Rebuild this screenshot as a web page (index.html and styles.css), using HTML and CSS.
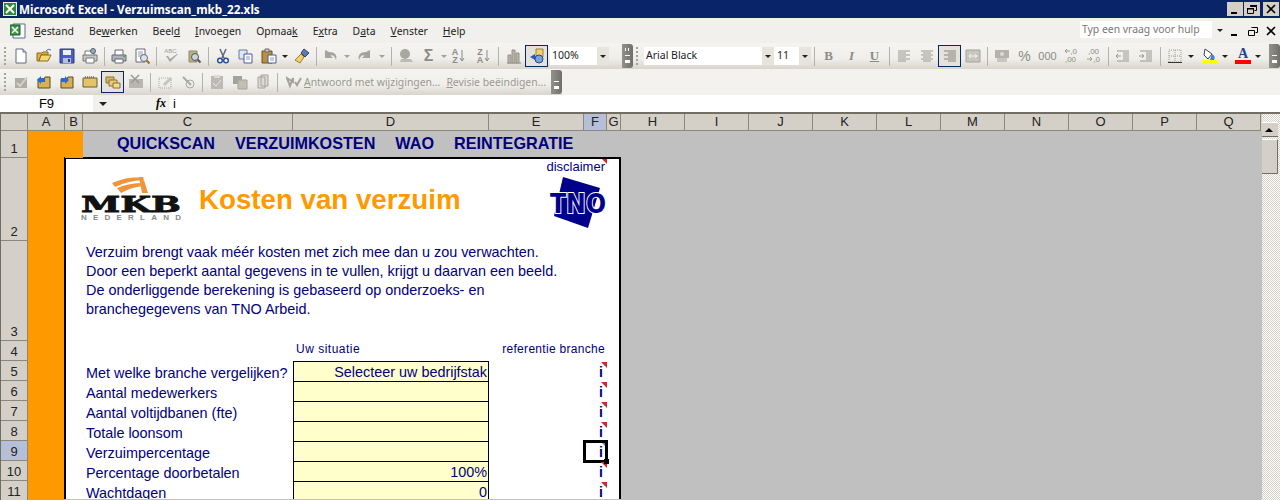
FILE: index.html
```html
<!DOCTYPE html>
<html lang="nl">
<head>
    <meta charset="UTF-8">
    <title>Microsoft Excel - Verzuimscan_mkb_22.xls</title>
    <link rel="stylesheet" href="styles.css">
</head>
<body>
<svg class="defs" width="0" height="0">
    <symbol id="i-new" viewBox="0 0 16 16"><path d="M3 1h7l3 3v11H3z" fill="#fff" stroke="#5a6a80"/><path d="M10 1v3h3" fill="#dde" stroke="#5a6a80"/></symbol>
    <symbol id="i-open" viewBox="0 0 16 16"><path d="M1 5h5l1-1h5v3H5L3 13H1z" fill="#e0b040" stroke="#8a6a20"/><path d="M3 13l2-6h10l-3 6z" fill="#f5d878" stroke="#8a6a20"/><path d="M10 3q2-3 5-1" fill="none" stroke="#4a6cc0"/></symbol>
    <symbol id="i-save" viewBox="0 0 16 16"><path d="M1 1h14v14H1z" fill="#4a5ec0" stroke="#2a3a80"/><path d="M4 2h8v5H4z" fill="#f0f0f0"/><path d="M4 10h8v5H4z" fill="#b8c0e0"/><path d="M9 11h2v3H9z" fill="#2a3a80"/></symbol>
    <symbol id="i-perm" viewBox="0 0 16 16"><path d="M3 7V3h9v4" fill="#fff" stroke="#777"/><path d="M1 7h14v6H1z" fill="#c8c8c8" stroke="#777"/><path d="M4 10h8v5H4z" fill="#fff" stroke="#777"/><circle cx="11" cy="3" r="2.5" fill="#9ab" stroke="#567"/></symbol>
    <symbol id="i-print" viewBox="0 0 16 16"><path d="M4 7V2h8v5" fill="#fff" stroke="#667"/><path d="M1 7h14v6H1z" fill="#aeb4bc" stroke="#667"/><path d="M4 11h8v4H4z" fill="#fff" stroke="#667"/><path d="M12 8h2v1h-2z" fill="#4a4"/></symbol>
    <symbol id="i-preview" viewBox="0 0 16 16"><path d="M2 1h9v13H2z" fill="#fff" stroke="#667"/><path d="M4 4h5M4 6h5M4 8h3" stroke="#99a"/><circle cx="10" cy="10" r="3.5" fill="#d8e4f4" stroke="#667"/><path d="M12.500 12.500l3 3" stroke="#a06a20" stroke-width="2"/></symbol>
    <symbol id="i-research" viewBox="0 0 16 16"><path d="M3 3h8v11H3z" fill="#c4b070" stroke="#888"/><circle cx="9" cy="9" r="3.500" fill="#c8d4e4" stroke="#555"/><path d="M11.500 11.500l3 3" stroke="#555" stroke-width="2"/></symbol>
    <symbol id="i-cut" viewBox="0 0 16 16"><path d="M5 1l4 9M11 1L7 10" stroke="#667" stroke-width="1.500" fill="none"/><circle cx="5" cy="12.500" r="2.300" fill="#fff" stroke="#2a4aa0" stroke-width="1.500"/><circle cx="11" cy="12.500" r="2.300" fill="#fff" stroke="#2a4aa0" stroke-width="1.500"/></symbol>
    <symbol id="i-copy" viewBox="0 0 16 16"><path d="M1 2h8v9H1z" fill="#dfe6f4" stroke="#6a7aa0"/><path d="M6 6h8v9H6z" fill="#fff" stroke="#4a5aa0"/><path d="M8 9h4M8 11h4" stroke="#89b"/></symbol>
    <symbol id="i-paste" viewBox="0 0 16 16"><path d="M1 3h10v12H1z" fill="#b89040" stroke="#6a5020"/><path d="M4 1h4v3H4z" fill="#ccc" stroke="#666"/><path d="M7 7h8v8H7z" fill="#fff" stroke="#4a5aa0"/><path d="M9 10h4M9 12h4" stroke="#89b"/></symbol>
    <symbol id="i-brush" viewBox="0 0 16 16"><path d="M10 1l5 4-4 4-4-4z" fill="#5a7ac0" stroke="#345"/><path d="M7 6l3 3-4 6-5-3z" fill="#f0d070" stroke="#a08030"/></symbol>
    <symbol id="i-undo" viewBox="0 0 16 16"><path d="M2 2v8h8L7.500 7.500Q11 6 13 12 15 4 6 4z" fill="#a4a49c"/></symbol>
    <symbol id="i-redo" viewBox="0 0 16 16"><path d="M14 2v8H6l2.500-2.500Q5 6 3 12 1 4 10 4z" fill="#a4a49c"/></symbol>
    <symbol id="i-link" viewBox="0 0 16 16"><circle cx="7" cy="6" r="5" fill="#a8a8a0"/><path d="M3 11h10l2 3H2z" fill="#bcbcb4"/></symbol>
    <symbol id="i-chart" viewBox="0 0 16 16"><path d="M1 15h14" stroke="#888"/><path d="M2 7h3v8H2zM6 2h3v13H6zM10 5h3v10h-3z" fill="#b8b4a4" stroke="#96928a"/></symbol>
    <symbol id="i-draw" viewBox="0 0 16 16"><path d="M7 1h7v8H7z" fill="#f0d070" stroke="#a08030"/><path d="M1 9l5-3v6z" fill="#2a5ac0"/><circle cx="10" cy="11" r="4" fill="#7aa0e0" stroke="#2a4a90"/></symbol>
    <symbol id="i-left" viewBox="0 0 16 16"><path d="M2 3h12M2 5h8M2 7h12M2 9h8M2 11h12M2 13h8" stroke="#9a9a94"/></symbol>
    <symbol id="i-center" viewBox="0 0 16 16"><path d="M2 3h12M4 5h8M2 7h12M4 9h8M2 11h12M4 13h8" stroke="#9a9a94"/></symbol>
    <symbol id="i-right" viewBox="0 0 16 16"><path d="M2 3h12M6 5h8M2 7h12M6 9h8M2 11h12M6 13h8" stroke="#84847e"/></symbol>
    <symbol id="i-merge" viewBox="0 0 16 16"><path d="M1 2h14v12H1z" fill="#c8c6be" stroke="#a4a29a"/><path d="M4 8h8M4 8l2-2M4 8l2 2M12 8l-2-2M12 8l-2 2" stroke="#f4f4f0" fill="none"/></symbol>
    <symbol id="i-money" viewBox="0 0 16 16"><path d="M1 2h14v8H1z" fill="#b4b2aa"/><path d="M3 10h10v4H3z" fill="#c8c6be"/><circle cx="8" cy="6" r="2" fill="#dcdad2"/></symbol>
    <symbol id="i-outdent" viewBox="0 0 16 16"><path d="M2 3h12M8 5h6M8 7h6M8 9h6M8 11h6M2 13h12" stroke="#9a9a94"/><path d="M6 8H1l2-2M1 8l2 2" stroke="#9a9a94" fill="none"/></symbol>
    <symbol id="i-indent" viewBox="0 0 16 16"><path d="M2 3h12M8 5h6M8 7h6M8 9h6M8 11h6M2 13h12" stroke="#9a9a94"/><path d="M1 8h5L4 6M6 8l-2 2" stroke="#9a9a94" fill="none"/></symbol>
    <symbol id="i-border" viewBox="0 0 16 16"><path d="M2 2h12v12H2zM8 2v12M2 8h12" fill="none" stroke="#9a9a94" stroke-dasharray="1 1"/><path d="M1 14.500h14" stroke="#333"/></symbol>
    <symbol id="i-fill" viewBox="0 0 16 16"><path d="M3 1l7 5-4 5-4-4z" fill="#fff" stroke="#345"/><path d="M10 6q4 2 2 6l-4 0z" fill="#4a7ad0"/><path d="M0 12h16v4H0z" fill="#ff0"/></symbol>
    <symbol id="i-check" viewBox="0 0 16 16"><path d="M2 4h12v10H2z" fill="#aeaca4"/><path d="M4 9l3 3 7-9" stroke="#d4d2ca" fill="none" stroke-width="2"/></symbol>
    <symbol id="i-prev" viewBox="0 0 16 16"><path d="M2 5h6l1-2h5v11H2z" fill="#d8b050" stroke="#5a4a20"/><path d="M1 6l4-4v2h4v4H5v2z" fill="#2a6ad0"/></symbol>
    <symbol id="i-next" viewBox="0 0 16 16"><path d="M2 5h6l1-2h5v11H2z" fill="#d8b050" stroke="#5a4a20"/><path d="M10 6L6 2v2H2v4h4v2z" fill="#2a6ad0"/></symbol>
    <symbol id="i-box" viewBox="0 0 16 16"><path d="M1 4h14v9H1z" fill="#e4c468" stroke="#6a5a30"/><path d="M3 3h10" stroke="#333" stroke-dasharray="1 1"/></symbol>
    <symbol id="i-stack" viewBox="0 0 16 16"><path d="M1 3h8v6H1z" fill="#d8b860" stroke="#8a7030"/><path d="M4 6h8v6H4z" fill="#e8cc78" stroke="#8a7030"/><path d="M8 9h7v5H8z" fill="#f0dc98" stroke="#8a7030"/></symbol>
    <symbol id="i-del" viewBox="0 0 16 16"><path d="M1 5h14v9H1z" fill="#b8b6ae"/><path d="M3 1l8 8M11 1L3 9" stroke="#9a9890" stroke-width="1.500"/></symbol>
    <symbol id="i-grey1" viewBox="0 0 16 16"><path d="M2 4h12v10H2z" fill="none" stroke="#aaa8a0" stroke-dasharray="1 1"/><path d="M6 10l7-7 2 2-7 7z" fill="#c4c2ba"/></symbol>
    <symbol id="i-grey2" viewBox="0 0 16 16"><path d="M3 3l8 8" stroke="#aaa8a0" stroke-width="2"/><circle cx="10" cy="10" r="4" fill="none" stroke="#aaa8a0"/></symbol>
    <symbol id="i-grey3" viewBox="0 0 16 16"><path d="M2 2h12v13H2z" fill="#bcbab2"/><path d="M5 1h6v3H5z" fill="#dcdad2"/><path d="M4 9l3 3 5-6" stroke="#e8e8e0" fill="none"/></symbol>
    <symbol id="i-grey4" viewBox="0 0 16 16"><path d="M1 2h9v8H1z" fill="#a4a29a"/><path d="M6 6h9v9H6z" fill="#c0beb6" stroke="#a4a29a"/></symbol>
    <symbol id="i-grey5" viewBox="0 0 16 16"><path d="M3 3h7v11H3zM6 1h7v11H6z" fill="#dcdad2" stroke="#a4a29a"/></symbol>
    <symbol id="i-reply" viewBox="0 0 16 16"><path d="M1 4l6 4V4l-3 8zM9 8l2 3 4-7" fill="none" stroke="#a4a29a" stroke-width="2"/></symbol>
    <symbol id="i-arrow" viewBox="0 0 6 16"><path d="M3 2v11M1 10l2 3 2-3" fill="none" stroke="#8c8c86"/></symbol>
    <symbol id="i-tick" viewBox="0 0 16 10"><path d="M3 2l4 6 8-8-1-0-7 5-2-3z" fill="#a8a49a"/></symbol>
    <symbol id="i-larrow" viewBox="0 0 6 6"><path d="M6 3H1M1 3l2-2M1 3l2 2" fill="none" stroke="#9a9a94"/></symbol>
    <symbol id="i-rarrow" viewBox="0 0 6 6"><path d="M0 3h5M5 3L3 1M5 3L3 5" fill="none" stroke="#9a9a94"/></symbol>
</svg>

<div class="titlebar">
    <svg class="app-icon" width="14" height="14" viewBox="0 0 14 14"><path d="M0 0h14v14H0z" fill="#e8f0e0"/><path d="M1 1h12v12H1z" fill="#2f8a3c"/><path d="M3 3l8 8M11 3l-8 8" stroke="#fff" stroke-width="2"/></svg>
    <span class="title-text">Microsoft Excel - Verzuimscan_mkb_22.xls</span>
    <div class="win-btns">
        <span class="win-btn"><svg width="10" height="10" viewBox="0 0 10 10"><path d="M1 8h6v2H1z"/></svg></span>
        <span class="win-btn"><svg width="10" height="10" viewBox="0 0 10 10"><path d="M3.500 2.500h6v4h-2M.5 4.500h6v5h-6z" fill="none" stroke="#000"/><path d="M3 1h7v1.500H3zM0 4h7v1.500H0z"/></svg></span>
        <span class="win-btn"><svg width="10" height="10" viewBox="0 0 10 10"><path d="M1 1l8 8M9 1L1 9" stroke="#000" stroke-width="1.600"/></svg></span>
    </div>
</div>

<div class="menubar">
    <svg class="sheet-icon" width="17" height="16" viewBox="0 0 17 16"><path d="M3 1h12v14H3z" fill="#fff" stroke="#5a6a90"/><path d="M0 2h10v10H0z" fill="#3a9a48" stroke="#1c5a28"/><path d="M2 4l6 6M8 4l-6 6" stroke="#fff" stroke-width="1.500"/></svg>
    <nav class="menu">
        <span><u>B</u>estand</span>
        <span>Be<u>w</u>erken</span>
        <span>Beel<u>d</u></span>
        <span><u>I</u>nvoegen</span>
        <span>Opmaa<u>k</u></span>
        <span>E<u>x</u>tra</span>
        <span>D<u>a</u>ta</span>
        <span><u>V</u>enster</span>
        <span><u>H</u>elp</span>
    </nav>
    <div class="help-box">Typ een vraag voor hulp</div>
    <span class="drop dark help-drop"></span>
    <div class="doc-btns">
        <svg width="10" height="10" viewBox="0 0 10 10"><path d="M1 8h6v2H1z"/></svg>
        <svg width="10" height="10" viewBox="0 0 10 10"><path d="M3.500 1.500h6v5h-2M.5 4.500h6v5h-6z" fill="none" stroke="#000"/></svg>
        <svg width="10" height="10" viewBox="0 0 10 10"><path d="M1 1l8 8M9 1L1 9" stroke="#000" stroke-width="1.600"/></svg>
    </div>
</div>

<div class="toolbar">
    <span class="grip"></span>
    <span class="btn"><svg><use href="#i-new"/></svg></span>
    <span class="btn"><svg><use href="#i-open"/></svg></span>
    <span class="btn"><svg><use href="#i-save"/></svg></span>
    <span class="btn"><svg><use href="#i-perm"/></svg></span>
    <span class="sep"></span>
    <span class="btn"><svg><use href="#i-print"/></svg></span>
    <span class="btn"><svg><use href="#i-preview"/></svg></span>
    <span class="sep"></span>
    <span class="btn spell"><span class="abc">ABC</span><svg><use href="#i-tick"/></svg></span>
    <span class="btn"><svg><use href="#i-research"/></svg></span>
    <span class="sep"></span>
    <span class="btn"><svg><use href="#i-cut"/></svg></span>
    <span class="btn"><svg><use href="#i-copy"/></svg></span>
    <span class="btn"><svg><use href="#i-paste"/></svg></span>
    <span class="dropcell"><span class="drop dark"></span></span>
    <span class="btn"><svg><use href="#i-brush"/></svg></span>
    <span class="sep"></span>
    <span class="btn"><svg><use href="#i-undo"/></svg></span>
    <span class="dropcell"><span class="drop"></span></span>
    <span class="btn"><svg><use href="#i-redo"/></svg></span>
    <span class="dropcell wide"><span class="drop"></span></span>
    <span class="sep"></span>
    <span class="btn"><svg><use href="#i-link"/></svg></span>
    <span class="btn glyph">Σ</span>
    <span class="dropcell narrow"><span class="drop"></span></span>
    <span class="btn sort"><span class="az">A<br>Z</span><svg class="sort-arrow"><use href="#i-arrow"/></svg></span>
    <span class="btn sort second-sort"><span class="az">Z<br>A</span><svg class="sort-arrow"><use href="#i-arrow"/></svg></span>
    <span class="sep"></span>
    <span class="btn chart"><svg><use href="#i-chart"/></svg></span>
    <span class="btn on"><svg><use href="#i-draw"/></svg></span>
    <span class="combo zoom-box">100%<span class="combo-arrow"></span></span>
    <span class="chevron wide"></span>
    <span class="grip"></span>
    <span class="combo font-box">Arial Black<span class="combo-arrow"></span></span>
    <span class="combo size-box">11<span class="combo-arrow"></span></span>
    <span class="sep"></span>
    <span class="btn txt bold">B</span>
    <span class="btn txt italic">I</span>
    <span class="btn txt under">U</span>
    <span class="sep"></span>
    <span class="btn"><svg><use href="#i-left"/></svg></span>
    <span class="btn"><svg><use href="#i-center"/></svg></span>
    <span class="btn on"><svg><use href="#i-right"/></svg></span>
    <span class="btn"><svg><use href="#i-merge"/></svg></span>
    <span class="sep"></span>
    <span class="btn"><svg><use href="#i-money"/></svg></span>
    <span class="btn txt pct">%</span>
    <span class="btn txt thou">000</span>
    <span class="btn dec"><span class="dec-top"><svg><use href="#i-larrow"/></svg>,0</span><span>,00</span></span>
    <span class="btn dec"><span class="dec-top">,00</span><span><svg><use href="#i-rarrow"/></svg>,0</span></span>
    <span class="sep"></span>
    <span class="btn"><svg><use href="#i-outdent"/></svg></span>
    <span class="btn"><svg><use href="#i-indent"/></svg></span>
    <span class="sep"></span>
    <span class="btn"><svg><use href="#i-border"/></svg></span>
    <span class="dropcell"><span class="drop dark"></span></span>
    <span class="btn small fill"><svg><use href="#i-fill"/></svg></span>
    <span class="dropcell"><span class="drop dark"></span></span>
    <span class="btn small color"><span class="color-a">A</span></span>
    <span class="dropcell"><span class="drop dark"></span></span>
    <span class="chevron"></span>
</div>

<div class="toolbar second">
    <div class="toolbar-part">
        <span class="grip"></span>
        <span class="btn"><svg><use href="#i-check"/></svg></span>
        <span class="btn"><svg><use href="#i-prev"/></svg></span>
        <span class="btn"><svg><use href="#i-next"/></svg></span>
        <span class="btn"><svg><use href="#i-box"/></svg></span>
        <span class="btn on"><svg><use href="#i-stack"/></svg></span>
        <span class="btn"><svg><use href="#i-del"/></svg></span>
        <span class="sep"></span>
        <span class="btn"><svg><use href="#i-grey1"/></svg></span>
        <span class="btn"><svg><use href="#i-grey2"/></svg></span>
        <span class="sep"></span>
        <span class="btn"><svg><use href="#i-grey3"/></svg></span>
        <span class="btn"><svg><use href="#i-grey4"/></svg></span>
        <span class="btn"><svg><use href="#i-grey5"/></svg></span>
        <span class="sep"></span>
        <svg class="reply"><use href="#i-reply"/></svg>
        <span class="tool-text answer"><u>A</u>ntwoord met wijzigingen...</span>
        <span class="tool-text"><u>R</u>evisie beëindigen...</span>
        <span class="chevron"></span>
    </div>
</div>

<div class="formula">
    <div class="namebox">F9</div>
    <span class="drop dark name-drop"></span>
    <span class="fx">fx</span>
    <div class="formula-input">i</div>
</div>

<div class="sheet">
    <div class="sheet-main">
        <div class="col-heads">
            <span></span>
            <span>A</span><span>B</span><span>C</span><span>D</span><span>E</span>
            <span class="cur">F</span><span>G</span><span>H</span><span>I</span>
            <span>J</span><span>K</span><span>L</span><span>M</span><span>N</span>
            <span>O</span><span>P</span><span>Q</span>
        </div>
        <div class="sheet-body">
            <div class="row-heads">
                <span class="r1">1</span>
                <span class="r2">2</span>
                <span class="r3">3</span>
                <span>4</span>
                <span>5</span>
                <span>6</span>
                <span>7</span>
                <span>8</span>
                <span class="cur">9</span>
                <span>10</span>
                <span>11</span>
            </div>
            <div class="stripe"></div>
            <div class="content">
                <div class="nav-row">
                    <div class="nav-orange"></div>
                    <div class="nav-links">
                        <span>QUICKSCAN</span>
                        <span>VERZUIMKOSTEN</span>
                        <span>WAO</span>
                        <span>REINTEGRATIE</span>
                    </div>
                </div>
                <div class="panel">
                    <div class="head">
                        <svg class="mkb" width="102" height="45" viewBox="0 0 102 45">
                            <path d="M31 6Q44 0 60 0L63 3Q46 4 34 10zM36 11Q48 6 62 6L64 9Q50 10 40 16zM58 0h4l5 16h-6z" fill="#f0943a"/>
                            <text class="mkb-word" x="0" y="35" textLength="100" lengthAdjust="spacingAndGlyphs">MKB</text>
                            <text class="mkb-sub" x="0" y="43" textLength="100">NEDERLAND</text>
                        </svg>
                        <h1>Kosten van verzuim</h1>
                        <div class="head-right">
                            <span class="disclaimer">disclaimer</span>
                            <svg class="tno" width="58" height="52" viewBox="0 0 58 52">
                                <path d="M14 0L51 11 39 51 5 39z" fill="#00008b"/>
                                <text class="tno-word" x="1" y="36" textLength="56" lengthAdjust="spacingAndGlyphs">TNO</text>
                            </svg>
                        </div>
                    </div>
                    <p class="intro">Verzuim brengt vaak méér kosten met zich mee dan u zou verwachten.<br>Door een beperkt aantal gegevens in te vullen, krijgt u daarvan een beeld.<br>De onderliggende berekening is gebaseerd op onderzoeks- en<br>branchegegevens van TNO Arbeid.</p>
                    <div class="form-head">
                        <span>Uw situatie</span>
                        <span>referentie branche</span>
                    </div>
                    <div class="form-row"><span class="lbl">Met welke branche vergelijken?</span><span class="val">Selecteer uw bedrijfstak</span><span class="info">i</span></div>
                    <div class="form-row"><span class="lbl">Aantal medewerkers</span><span class="val"></span><span class="info">i</span></div>
                    <div class="form-row"><span class="lbl">Aantal voltijdbanen (fte)</span><span class="val"></span><span class="info">i</span></div>
                    <div class="form-row"><span class="lbl">Totale loonsom</span><span class="val"></span><span class="info">i</span></div>
                    <div class="form-row"><span class="lbl">Verzuimpercentage</span><span class="val"></span><span class="info selected">i<span class="handle"></span></span></div>
                    <div class="form-row"><span class="lbl">Percentage doorbetalen</span><span class="val">100%</span><span class="info">i</span></div>
                    <div class="form-row"><span class="lbl">Wachtdagen</span><span class="val">0</span><span class="info">i</span></div>
                </div>
            </div>
        </div>
    </div>
    <div class="vscroll">
        <span class="sb-btn"></span>
        <span class="sb-thumb"></span>
    </div>
</div>
</body>
</html>
```

FILE: styles.css
```css
* {
    margin: 0;
    padding: 0;
    box-sizing: border-box;
}

html, body {
    width: 1280px;
    height: 500px;
    overflow: hidden;
}

body {
    background: #c0c0c0;
    font-family: "Liberation Sans", Arial, sans-serif;
    color: #000;
}

.defs {
    display: block;
    height: 0;
}

/* title bar */
.titlebar {
    height: 18px;
    background: #0a246a;
    display: flex;
    align-items: center;
    padding-left: 3px;
}

.title-text {
    margin-left: 2px;
    color: #fff;
    font: bold 11.7px "Noto Sans", sans-serif;
}

.win-btns {
    margin-left: auto;
    margin-right: 1px;
    display: flex;
}

.win-btn {
    width: 16px;
    height: 14px;
    margin-left: 1px;
    background: #d4d0c8;
    display: flex;
    align-items: center;
    justify-content: center;
}

.win-btn:last-child {
    margin-left: 3px;
}

/* menu */
.menubar {
    height: 25px;
    background: #f1f0ec;
    display: flex;
    align-items: center;
    padding-left: 10px;
    font: 10.4px "Noto Sans", sans-serif;
    color: #222;
}

.menu {
    margin-left: 7px;
    display: flex;
    gap: 15px;
}

.help-box {
    margin-left: auto;
    width: 132px;
    height: 17px;
    margin-top: -3px;
    padding-left: 2px;
    background: #fff;
    color: #777;
    line-height: 17px;
}

.help-drop {
    margin: 0 7px 0 5px;
}

.doc-btns {
    display: flex;
    gap: 8px;
    margin-right: 4px;
}

/* toolbars */
.toolbar {
    height: 26px;
    display: flex;
    align-items: center;
    background: linear-gradient(#f5f4f0, #efeeea 60%, #d8d5cc);
    padding-left: 3px;
    color: #555;
}

.toolbar.second {
    background: #f3f2ee;
    padding-left: 0;
}

.toolbar-part {
    height: 26px;
    width: 562px;
    padding-left: 3px;
    display: flex;
    align-items: center;
    background: linear-gradient(#f5f4f0, #efeeea 60%, #d8d5cc);
}

.grip {
    width: 5px;
    height: 18px;
    margin-right: 1px;
    background: repeating-linear-gradient(#a4a29a 0 2px, transparent 2px 4px) 1px 0 / 2px 100% no-repeat;
}

.btn {
    width: 23px;
    height: 22px;
    flex: none;
    display: flex;
    align-items: center;
    justify-content: center;
}

.btn svg {
    width: 16px;
    height: 16px;
}

.btn.small {
    width: 20px;
}

.btn.fill {
    margin-left: 4px;
}

.btn.color {
    margin-left: 3px;
}

.color-a {
    width: 16px;
    height: 16px;
    display: block;
    font: bold 14px/12px "Liberation Serif", serif;
    text-align: center;
    color: #23408f;
    border-bottom: 4px solid #f00;
}

.btn.on {
    background: #e4e2da;
    border: 1px solid #0a246a;
}

.btn.chart {
    margin-left: 1px;
}

.spell {
    flex-direction: column;
}

.abc {
    font-size: 6px;
    line-height: 6px;
    color: #999;
}

.spell svg {
    height: 10px;
}

.sep {
    width: 6px;
    height: 19px;
    flex: none;
    background: linear-gradient(#b4b2aa, #b4b2aa) center / 1px 100% no-repeat;
}

.dropcell {
    width: 10px;
    flex: none;
    display: flex;
    justify-content: center;
}

.dropcell.wide {
    width: 13px;
}

.dropcell.narrow {
    width: 7px;
}

.drop {
    width: 0;
    height: 0;
    flex: none;
    border-left: 3px solid transparent;
    border-right: 3px solid transparent;
    border-top: 3px solid #a4a29a;
}

.drop.dark {
    border-top-color: #222;
}

.glyph {
    font-size: 16px;
    font-weight: bold;
    color: #8c8c86;
}

.sort {
    gap: 1px;
}

.second-sort {
    margin-left: 2px;
}

.az {
    font-size: 9px;
    line-height: 8px;
    font-weight: bold;
    text-align: center;
    color: #8c8c86;
}

.btn svg.sort-arrow {
    width: 6px;
}

.dec {
    flex-direction: column;
    font-size: 8px;
    line-height: 8px;
    color: #8c8c86;
}

.dec svg {
    width: 6px;
    height: 6px;
}

.txt {
    font-family: "Liberation Serif", serif;
    font-size: 13px;
    color: #8c8c86;
}

.bold {
    font-weight: bold;
}

.italic {
    font-style: italic;
    font-weight: bold;
}

.under {
    font-weight: bold;
    text-decoration: underline;
}

.pct {
    font-family: "Liberation Sans", sans-serif;
    font-size: 14px;
}

.thou {
    font-family: "Liberation Sans", sans-serif;
    font-size: 11px;
}

.combo {
    height: 18px;
    flex: none;
    position: relative;
    padding-left: 2px;
    background: #fff;
    color: #222;
    font: 10.5px/17px "Noto Sans", sans-serif;
}

.combo-arrow {
    position: absolute;
    right: 0;
    top: 0;
    width: 12px;
    height: 18px;
    background: #e6e4dc;
}

.combo-arrow::after {
    content: "";
    position: absolute;
    left: 3px;
    top: 8px;
    border-left: 3px solid transparent;
    border-right: 3px solid transparent;
    border-top: 3px solid #222;
}

.zoom-box {
    width: 59px;
    margin-left: 2px;
    margin-right: 13px;
}

.font-box {
    width: 130px;
    margin-left: 3px;
}

.size-box {
    width: 37px;
    padding-left: 3px;
}

.chevron {
    width: 11px;
    height: 24px;
    flex: none;
    position: relative;
    background: linear-gradient(90deg, #92918b, #70706a);
    border-radius: 0 3px 3px 0;
}

.chevron::after {
    content: "";
    position: absolute;
    left: 3px;
    bottom: 5px;
    width: 5px;
    height: 4px;
    border-top: 1px solid #fff;
    border-bottom: 3px solid #fff;
}

.chevron.wide {
    margin-right: 2px;
}

.chevron.wide::before {
    content: "";
    position: absolute;
    left: 3px;
    top: 4px;
    width: 5px;
    height: 3px;
    background: repeating-linear-gradient(90deg, #fff 0 1px, transparent 1px 3px);
}

.toolbar > .chevron:last-child {
    margin-left: auto;
}

.reply {
    width: 16px;
    height: 16px;
    margin-left: 6px;
}

.tool-text {
    font: 10.4px "Noto Sans", sans-serif;
    color: #9a9890;
    white-space: nowrap;
}

.answer {
    margin-left: 2px;
    margin-right: 6px;
}

.toolbar-part > .chevron {
    margin-left: auto;
}

/* formula bar */
.formula {
    height: 17px;
    display: flex;
    align-items: center;
    background: #f1f0ec;
}

.namebox {
    width: 93px;
    height: 17px;
    background: #fff;
    font-size: 13px;
    line-height: 17px;
    text-align: center;
}

.name-drop {
    margin-left: 6px;
    border-left-width: 4px;
    border-right-width: 4px;
    border-top-width: 4px;
}

.fx {
    width: 14px;
    margin-left: 49px;
    font: italic bold 12px "Liberation Serif", serif;
}

.formula-input {
    flex: 1;
    height: 17px;
    padding-left: 3px;
    background: #fff;
    font-size: 13px;
    line-height: 17px;
}

/* sheet */
.sheet {
    display: flex;
    height: 388px;
    overflow: hidden;
}

.sheet-main {
    width: 1262px;
}

.col-heads {
    height: 19px;
    display: grid;
    grid-template-columns: 27px 37px 18px 210px 196px 95px 23px 14px repeat(10, 64px);
    background: #d4d0c8;
    border-top: 2px solid #716f64;
    border-left: 1px solid #716f64;
    font-size: 13px;
    line-height: 16px;
    text-align: center;
    color: #222;
}

.col-heads span {
    border-right: 1px solid #8a887e;
    border-bottom: 1px solid #8a887e;
}

.col-heads .cur,
.row-heads .cur {
    background: #b5c0d8;
}

.sheet-body {
    display: flex;
    height: 369px;
    overflow: hidden;
}

.row-heads {
    width: 28px;
    flex: none;
    display: flex;
    flex-direction: column;
    border-left: 1px solid #716f64;
}

.row-heads span {
    height: 20px;
    flex: none;
    display: flex;
    align-items: flex-end;
    justify-content: center;
    background: #d4d0c8;
    border-right: 1px solid #8a887e;
    border-bottom: 1px solid #8a887e;
    font-size: 13px;
    line-height: 17px;
    color: #222;
}

.row-heads .r1 {
    height: 27px;
}

.row-heads .r2 {
    height: 83px;
}

.row-heads .r3 {
    height: 100px;
}

.stripe {
    width: 37px;
    flex: none;
    background: #ff9900;
}

.content {
    flex: 1;
}

.nav-row {
    height: 27px;
    display: flex;
}

.nav-orange {
    width: 18px;
    background: #ff9900;
}

.nav-links {
    display: flex;
    gap: 20px;
    padding: 3px 0 0 34px;
    font-size: 16.2px;
    font-weight: bold;
    color: #000080;
}

.panel {
    width: 557px;
    height: 342px;
    margin: -1px 0 0 -1px;
    background: #fff;
    border: 2px solid #000;
    border-bottom: 0;
    overflow: hidden;
    color: #000080;
}

.head {
    height: 82px;
    display: flex;
    padding-left: 15px;
}

.mkb {
    margin-top: 18px;
    flex: none;
}

.mkb-word {
    font: bold 23px "DejaVu Serif", serif;
    fill: #111;
    stroke: #111;
    stroke-width: 0.8px;
}

.mkb-sub {
    font: bold 8px "Liberation Sans", sans-serif;
    fill: #888;
}

h1 {
    margin: 25px 0 0 16px;
    font-size: 27.7px;
    font-weight: bold;
    line-height: 32px;
    color: #ff9900;
    white-space: nowrap;
}

.head-right {
    margin-left: auto;
    width: 62px;
    margin-right: 12px;
    text-align: right;
    position: relative;
}

.disclaimer {
    display: block;
    font-size: 13px;
    line-height: 14px;
    margin-top: 1px;
    margin-right: 2px;
    white-space: nowrap;
}

.head-right::after {
    content: "";
    position: absolute;
    right: 0;
    top: 0;
    border-top: 5px solid #e0202c;
    border-left: 5px solid transparent;
}

.tno {
    display: block;
    margin-top: 3px;
    margin-left: 4px;
}

.tno-word {
    font: bold 27px "DejaVu Sans", sans-serif;
    fill: #00008b;
    stroke: #fff;
    stroke-width: 2px;
    paint-order: stroke;
}

.intro {
    height: 100px;
    padding: 2px 0 0 20px;
    font-size: 14.4px;
    line-height: 19px;
}

.form-head {
    height: 20px;
    display: flex;
    justify-content: space-between;
    padding: 0 14px 0 230px;
    font-size: 12px;
    line-height: 16px;
    letter-spacing: 0.3px;
}

.form-head span:first-child {
    letter-spacing: 0.5px;
}

.form-row {
    height: 20px;
    display: grid;
    grid-template-columns: 227px 196px 118px;
    font-size: 14.4px;
    line-height: 25px;
}

.lbl {
    padding-left: 20px;
    white-space: nowrap;
}

.val {
    background: #ffffcc;
    border: 1px solid #000;
    margin-bottom: -1px;
    padding-right: 1px;
    text-align: right;
    line-height: 20px;
}

.info {
    position: relative;
    margin-left: 95px;
    padding-right: 4px;
    text-align: right;
    font-weight: bold;
    font-size: 14px;
    line-height: 22px;
}

.info::before {
    content: "";
    position: absolute;
    right: 0;
    top: 1px;
    border-top: 6px solid #e0202c;
    border-left: 6px solid transparent;
}

.selected::after {
    content: "";
    position: absolute;
    left: -1px;
    right: -1px;
    top: -1px;
    height: 17px;
    border: 3px solid #000;
}

.selected::before {
    border-top-color: #6a8a8a;
}

.handle {
    position: absolute;
    right: -2px;
    top: 18px;
    width: 5px;
    height: 5px;
    background: #000;
    z-index: 1;
}

/* scrollbar */
.vscroll {
    width: 18px;
    padding-top: 8px;
    display: flex;
    flex-direction: column;
    gap: 2px;
    background: repeating-conic-gradient(#fff 0 25%, #d4d0c8 0 50%) 0 0 / 2px 2px;
    border-top: 2px solid #716f64;
}

.sb-btn {
    width: 16px;
    height: 15px;
    background: #d4d0c8;
    border-top: 1px solid #fff;
    border-bottom: 1px solid #716f64;
    position: relative;
}

.sb-btn::after {
    content: "";
    position: absolute;
    left: 3px;
    top: 5px;
    border-left: 4px solid transparent;
    border-right: 4px solid transparent;
    border-bottom: 4px solid #000;
}

.sb-thumb {
    width: 16px;
    height: 35px;
    background: #d4d0c8;
    border-top: 1px solid #fff;
    border-right: 1px solid #716f64;
    border-bottom: 1px solid #716f64;
}
```
